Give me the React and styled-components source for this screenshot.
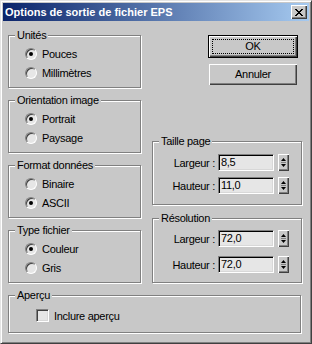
import React from "react";
import styled, { createGlobalStyle } from "styled-components";

const GlobalStyle = createGlobalStyle`
  html, body {
    margin: 0;
    padding: 0;
    background: #c8c8c8;
  }
  body {
    font-family: "Liberation Sans", Arial, sans-serif;
    font-size: 11px;
    color: #000;
  }
`;

const Window = styled.div`
  width: 312px;
  height: 344px;
  box-sizing: border-box;
  background: #c8c8c8;
  border: 1px solid;
  border-color: #e4e4e4 #404040 #404040 #e4e4e4;
  box-shadow: inset 1px 1px #fff, inset -1px -1px #808080;
  padding: 2px;
  display: flex;
  flex-direction: column;
`;

const TitleBar = styled.div`
  height: 18px;
  display: flex;
  align-items: center;
  justify-content: space-between;
  padding: 0 2px;
  background: linear-gradient(to right, #0a246a, #a6caf0);
`;

const Title = styled.span`
  color: #fff;
  font-weight: bold;
  font-size: 11px;
  line-height: 13px;
`;

const CloseButton = styled.div`
  width: 16px;
  height: 14px;
  box-sizing: border-box;
  background: #c8c8c8;
  box-shadow: inset 1px 1px #fff, inset -1px -1px #404040, inset -2px -2px #808080;
  display: flex;
  align-items: center;
  justify-content: center;
`;

const Body = styled.div`
  flex: 1;
  display: flex;
  flex-direction: column;
  padding: 14px 0 0 5px;
  letter-spacing: -0.3px;
`;

const Columns = styled.div`
  display: grid;
  grid-template-columns: 133px 150px;
  column-gap: 11px;
  align-items: start;
`;

const Column = styled.div`
  display: flex;
  flex-direction: column;
  gap: ${(p) => p.$gap || 0}px;
`;

const Group = styled.div`
  box-sizing: border-box;
  width: ${(p) => p.$width || "auto"};
  height: ${(p) => p.$height}px;
  margin-top: ${(p) => p.$top || 0}px;
  border: 1px solid #808080;
  box-shadow: inset 1px 1px #fff, 1px 1px #fff;
  padding-left: ${(p) => p.$pad}px;
  display: flex;
  flex-direction: column;
`;

const Legend = styled.div`
  align-self: flex-start;
  margin: -7px 0 0 ${(p) => 6 - p.$pad}px;
  padding: 0 2px;
  line-height: 13px;
  background: #c8c8c8;
`;

const OptionRow = styled.label`
  height: 19px;
  margin-top: ${(p) => p.$top || 0}px;
  display: flex;
  align-items: center;
  gap: 5px;
`;

const Radio = styled.span`
  width: 12px;
  height: 12px;
  box-sizing: border-box;
  border-radius: 50%;
  border: 1px solid;
  border-color: #808080 #fff #fff #808080;
  background: #e6e6e6;
  box-shadow: inset 1px 1px #404040;
  display: flex;
  align-items: center;
  justify-content: center;

  &::after {
    content: "";
    width: 4px;
    height: 4px;
    border-radius: 50%;
    background: ${(p) => (p.$checked ? "#000" : "transparent")};
  }
`;

const Checkbox = styled.span`
  width: 13px;
  height: 13px;
  box-sizing: border-box;
  border: 1px solid;
  border-color: #808080 #fff #fff #808080;
  background: #e6e6e6;
  box-shadow: inset 1px 1px #404040, inset -1px -1px #d8d8d8;
`;

const Button = styled.div`
  align-self: flex-end;
  margin-right: 4px;
  width: 90px;
  height: 23px;
  box-sizing: border-box;
  background: #c8c8c8;
  border: 1px solid ${(p) => (p.$default ? "#000" : "transparent")};
  box-shadow: ${(p) =>
    p.$default
      ? "inset 1px 1px #fff, inset -1px -1px #404040, inset -2px -2px #808080"
      : "inset 1px 1px #fff, inset -1px -1px #404040, inset -2px -2px #808080"};
  display: flex;
  align-items: stretch;
  justify-content: stretch;
  padding: 3px;
`;

const ButtonFace = styled.span`
  flex: 1;
  display: flex;
  align-items: center;
  justify-content: center;
  border: 1px dotted ${(p) => (p.$focus ? "#000" : "transparent")};
  line-height: 13px;
`;

const SpinRow = styled.div`
  display: flex;
  align-items: center;
  height: 17px;
  margin-top: ${(p) => p.$top}px;
`;

const FieldLabel = styled.span`
  width: 62px;
  text-align: right;
  margin-right: 3px;
`;

const Field = styled.div`
  width: 56px;
  height: 17px;
  box-sizing: border-box;
  border: 1px solid;
  border-color: #808080 #fff #fff #808080;
  box-shadow: inset 1px 1px #000, inset -1px -1px #d8d8d8;
  background: #e6e6e6;
  padding: 1px 0 0 2px;
  line-height: 13px;
`;

const Spinner = styled.div`
  width: 11px;
  height: 17px;
  margin-left: 4px;
  box-sizing: border-box;
  background: #c8c8c8;
  box-shadow: inset 1px 1px #fff, inset -1px -1px #404040, inset -2px -2px #808080;
  display: flex;
  align-items: center;
  justify-content: center;
`;

const Options = ({ items, checked }) =>
  items.map((label, i) => (
    <OptionRow key={label} $top={i === 0 ? 2 : 0}>
      <Radio $checked={i === checked} />
      {label}
    </OptionRow>
  ));

const Spin = ({ label, value, top }) => (
  <SpinRow $top={top}>
    <FieldLabel>{label}</FieldLabel>
    <Field>{value}</Field>
    <Spinner>
      <svg width="7" height="11" viewBox="0 0 7 11">
        <path d="M3.5 1 L6 4 H1 Z" fill="#000" />
        <path d="M1 5.5 H6" stroke="#808080" strokeWidth="1" />
        <path d="M1 7 H6 L3.5 10 Z" fill="#000" />
      </svg>
    </Spinner>
  </SpinRow>
);

export default function App() {
  return (
    <>
      <GlobalStyle />
      <Window>
        <TitleBar>
          <Title>Options de sortie de fichier EPS</Title>
          <CloseButton>
            <svg width="8" height="7" viewBox="0 0 8 7">
              <path
                d="M0 0h2v1h1v1h2v-1h1v-1h2v1h-1v1h-1v1h-1v1h1v1h1v1h1v1h-2v-1h-1v-1h-2v1h-1v1h-2v-1h1v-1h1v-1h1v-1h-1v-1h-1v-1h-1z"
                fill="#000"
              />
            </svg>
          </CloseButton>
        </TitleBar>
        <Body>
          <Columns>
            <Column $gap={12}>
              <Group $height={53} $pad={16}>
                <Legend $pad={16}>Unités</Legend>
                <Options items={["Pouces", "Millimètres"]} checked={0} />
              </Group>
              <Group $height={53} $pad={16}>
                <Legend $pad={16}>Orientation image</Legend>
                <Options items={["Portrait", "Paysage"]} checked={0} />
              </Group>
              <Group $height={53} $pad={16}>
                <Legend $pad={16}>Format données</Legend>
                <Options items={["Binaire", "ASCII"]} checked={1} />
              </Group>
              <Group $height={53} $pad={16}>
                <Legend $pad={16}>Type fichier</Legend>
                <Options items={["Couleur", "Gris"]} checked={0} />
              </Group>
            </Column>
            <Column>
              <Button $default>
                <ButtonFace $focus>OK</ButtonFace>
              </Button>
              <Button style={{ marginTop: 5 }}>
                <ButtonFace>Annuler</ButtonFace>
              </Button>
              <Group $height={64} $pad={0} $top={55}>
                <Legend $pad={0}>Taille page</Legend>
                <Spin label="Largeur :" value="8,5" top={6} />
                <Spin label="Hauteur :" value="11,0" top={6} />
              </Group>
              <Group $height={65} $pad={0} $top={13}>
                <Legend $pad={0}>Résolution</Legend>
                <Spin label="Largeur :" value="72,0" top={5} />
                <Spin label="Hauteur :" value="72,0" top={9} />
              </Group>
            </Column>
          </Columns>
          <Group $height={38} $pad={27} $top={12} $width="293px">
            <Legend $pad={27}>Aperçu</Legend>
            <OptionRow $top={4}>
              <Checkbox />
              Inclure aperçu
            </OptionRow>
          </Group>
        </Body>
      </Window>
    </>
  );
}
